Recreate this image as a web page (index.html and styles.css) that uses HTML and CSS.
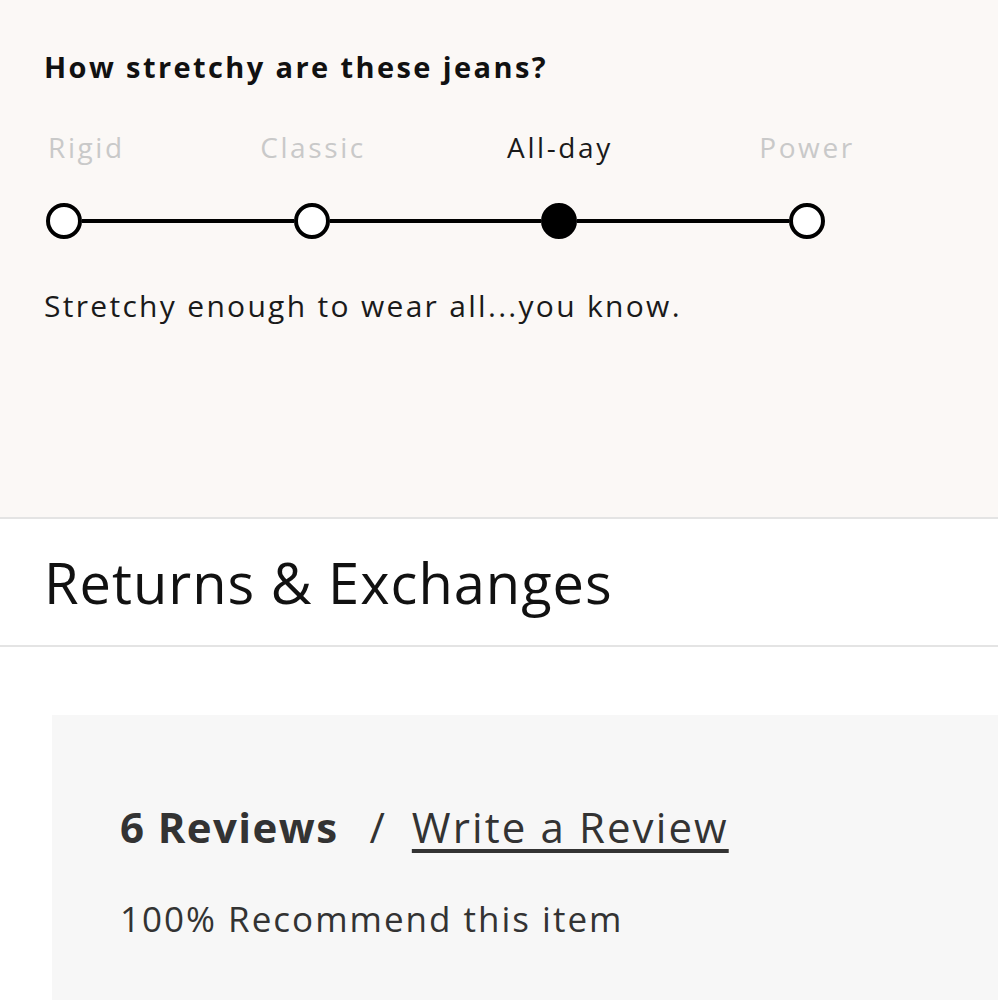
FILE: index.html
```html
<!DOCTYPE html>
<html>
<head>
  <title>Stretch &amp; Reviews</title>
  <link rel="stylesheet" href="styles.css">
</head>
<body>

<!-- stretch meter -->
<div class="fit">
  <h3 class="fit-title">How stretchy are these jeans?</h3>

  <div class="fit-labels">
    <span class="fit-label first">Rigid</span>
    <span class="fit-label">Classic</span>
    <span class="fit-label on">All-day</span>
    <span class="fit-label">Power</span>
  </div>

  <div class="fit-track">
    <span class="dot"></span><span class="seg"></span>
    <span class="dot"></span><span class="seg"></span>
    <span class="dot on"></span><span class="seg"></span>
    <span class="dot"></span>
  </div>

  <p class="fit-note">Stretchy enough to wear all...you know.</p>
</div>

<div class="drawer">
  <h2 class="drawer-title">Returns &amp; Exchanges</h2>
</div>

<!-- reviews summary -->
<div class="reviews">
  <div class="reviews-head"><b>6 Reviews</b><span class="slash">/</span><a href="#" class="write">Write a Review</a></div>
  <p class="recommend">100% Recommend this item</p>
</div>

</body>
</html>
```

FILE: styles.css
```css
body { margin: 0; font-family: "Open Sans", "Noto Sans", sans-serif; color: #111; background: #fff }

.fit { background: #fbf8f6; padding: 44px 44px 0; height: 473px; border-bottom: 2px solid #e4e4e4 }
.fit-title { margin: 0; font-size: 29px; font-weight: 700; line-height: 46px; letter-spacing: 2.4px }

.fit-labels { display: flex; justify-content: space-between; width: 779px; margin: 37px 0 0 2px; height: 40px }
.fit-label { width: 36px; display: flex; justify-content: center; white-space: nowrap; font-size: 28px; color: #c9c9c9; line-height: 40px; letter-spacing: 2.6px }
.fit-label.first { justify-content: flex-start; padding-left: 2px }
.fit-label.on { color: #1a1a1a }

.fit-track { display: flex; align-items: center; width: 779px; margin: 36px 0 0 2px }
.dot { width: 28px; height: 28px; border: 4px solid #000; border-radius: 50%; background: #fff; flex: none }
.dot.on { background: #000 }
.seg { flex: 1; height: 4px; background: #000 }

.fit-note { margin: 45px 0 0; font-size: 30px; line-height: 44px; color: #1a1a1a; letter-spacing: 2.3px }

.drawer { border-bottom: 2px solid #e4e4e4; height: 126px; display: flex; align-items: center; padding-left: 44px }
.drawer-title { margin: 0; font-size: 56px; font-weight: 400; color: #111; letter-spacing: 1px }

.reviews { margin: 68px 0 0 52px; background: #f7f7f7; padding: 84px 68px 60px; color: #333 }
.reviews-head { display: flex; align-items: baseline; font-size: 42px; line-height: 56px }
.reviews-head b { font-weight: 700; letter-spacing: 1.4px }
.slash { margin: 0 27px 0 31px }
.write { color: #333; letter-spacing: 2.1px; text-underline-offset: 6px }
.recommend { margin: 40px 0 0; font-size: 35px; line-height: 48px; letter-spacing: 2px }
```
